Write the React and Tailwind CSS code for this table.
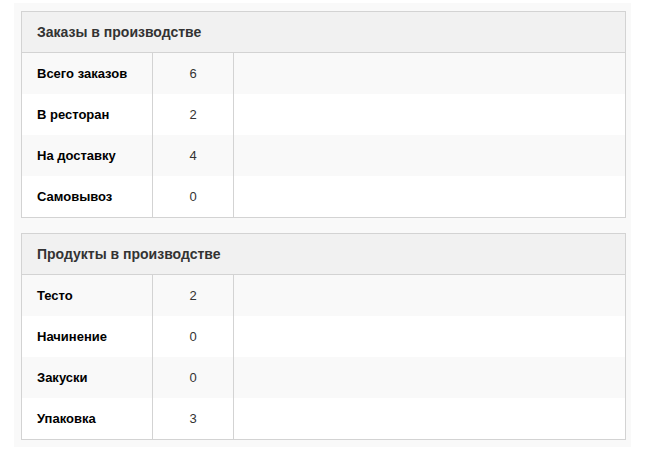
import React from "react";

const orders = [
  ["Всего заказов", 6],
  ["В ресторан", 2],
  ["На доставку", 4],
  ["Самовывоз", 0],
];

const products = [
  ["Тесто", 2],
  ["Начинение", 0],
  ["Закуски", 0],
  ["Упаковка", 3],
];

function Panel({ title, rows, className = "" }) {
  return (
    <div className={`border border-[#d3d3d3] bg-white ${className}`}>
      <div className="h-[41px] flex items-center px-[15px] bg-[#f1f1f1] border-b border-[#d3d3d3] text-[14px] font-bold text-[#333]">
        {title}
      </div>
      {rows.map(([label, value], i) => (
        <div
          key={label}
          className={`flex h-[41px] ${i % 2 === 0 ? "bg-[#f9f9f9]" : "bg-white"}`}
        >
          <div className="w-[131px] flex items-center px-[15px] border-r border-[#d3d3d3] text-[13px] font-bold text-black">
            {label}
          </div>
          <div className="w-[81px] flex items-center justify-center border-r border-[#d3d3d3] text-[13px] text-[#333]">
            {value}
          </div>
          <div className="flex-1" />
        </div>
      ))}
    </div>
  );
}

export default function App() {
  return (
    <div className="w-[650px] h-[454px] bg-white pt-[3px] pl-[14px] font-['Liberation_Sans',Arial,sans-serif]">
      <div className="w-[617px] bg-[#f9f9f9] pt-[8px] pb-[7px] pl-[7px] pr-[5px]">
        <Panel title="Заказы в производстве" rows={orders} />
        <Panel title="Продукты в производстве" rows={products} className="mt-[15px]" />
      </div>
    </div>
  );
}
